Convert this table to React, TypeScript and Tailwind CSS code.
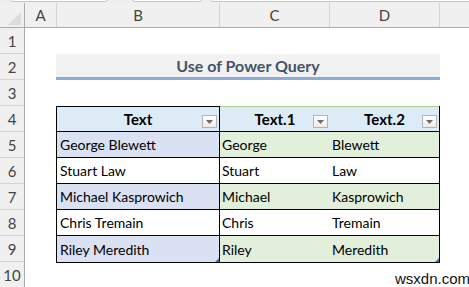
import React from 'react';

const ROWS = [
  { full: 'George Blewett', first: 'George', last: 'Blewett' },
  { full: 'Stuart Law', first: 'Stuart', last: 'Law' },
  { full: 'Michael Kasprowich', first: 'Michael', last: 'Kasprowich' },
  { full: 'Chris Tremain', first: 'Chris', last: 'Tremain' },
  { full: 'Riley Meredith', first: 'Riley', last: 'Meredith' },
];

function FilterButton() {
  return (
    <div className="w-[15px] h-[13px] border border-[#b4b4b4] bg-gradient-to-b from-white to-[#ececec] flex items-center justify-center">
      <svg width="7" height="4" viewBox="0 0 7 4">
        <path d="M0 0 L7 0 L3.5 4 Z" fill="#6b6b6b" />
      </svg>
    </div>
  );
}

function Handle() {
  return (
    <svg className="absolute right-0 bottom-0" width="4" height="4" viewBox="0 0 4 4">
      <path d="M4 0 L4 4 L0 4 Z" fill="#4472c4" />
    </svg>
  );
}

export default function App() {
  return (
    <div className="relative w-[469px] h-[287px] overflow-hidden bg-white font-['Lato',sans-serif]">
      {/* formula bar edges */}
      <div className="h-[3px] bg-[#eeeeee] relative">
        <div className="absolute left-[10px] top-[-6px] w-[98px] h-[8px] bg-white border border-[#c6c6c6] rounded-[3px]" />
        <div className="absolute left-[132px] top-[-6px] w-[70px] h-[8px] bg-white border border-[#c6c6c6] rounded-[3px]" />
        <div className="absolute left-[210px] top-[-6px] w-[270px] h-[8px] bg-white border border-[#c6c6c6] rounded-[3px]" />
      </div>

      {/* column headers */}
      <div className="flex h-[25px] bg-[#f0f0f0] border-b border-[#ababab] text-[15px] text-[#444444]">
        <div className="w-[25px] border-r border-[#ababab] flex items-end justify-end pr-[3px] pb-[2px]">
          <svg width="13" height="13" viewBox="0 0 13 13">
            <path d="M13 0 L13 13 L0 13 Z" fill="#dcdcdc" />
          </svg>
        </div>
        <div className="w-[32px] border-r border-[#d4d4d4] flex items-center justify-center">A</div>
        <div className="w-[163px] border-r border-[#d4d4d4] flex items-center justify-center">B</div>
        <div className="w-[110px] border-r border-[#d4d4d4] flex items-center justify-center">C</div>
        <div className="w-[110px] border-r border-[#d4d4d4] flex items-center justify-center">D</div>
        <div className="flex-1" />
      </div>

      <div className="flex">
        {/* row headers */}
        <div className="w-[25px] bg-[#f0f0f0] border-r border-[#ababab] text-[15px] text-[#444444]">
          {[1, 2, 3, 4, 5, 6, 7, 8, 9, 10].map((n) => (
            <div key={n} className="h-[26px] border-b border-[#d4d4d4] flex items-end justify-center pb-[1px]">
              {n}
            </div>
          ))}
        </div>

        {/* sheet */}
        <div className="flex-1 pl-[31px]">
          <div className="h-[26px]" />
          <div className="w-[384px] h-[26px] bg-[#f2f2f2] border-b-[3px] border-[#8eaadb] flex items-center justify-center text-[16px] font-bold text-[#44546a]">
            Use of Power Query
          </div>
          <div className="h-[26px]" />

          <div className="w-[384px] border-l border-r border-b border-black text-[14px] text-black">
            <div className="flex h-[26px] border-b border-black text-[15px]">
              <div className="w-[163px] border-r border-t border-black bg-[#ddebf7] relative flex items-center justify-center font-bold">
                Text
                <div className="absolute right-[2px] top-[8px]">
                  <FilterButton />
                </div>
              </div>
              <div className="flex-1 flex border-t border-[#a9d08e] bg-[#ddebf7] font-bold">
                <div className="w-[110px] relative flex items-center justify-center">
                  Text.1
                  <div className="absolute right-[2px] top-[8px]">
                    <FilterButton />
                  </div>
                </div>
                <div className="flex-1 relative flex items-center justify-center">
                  Text.2
                  <div className="absolute right-[2px] top-[8px]">
                    <FilterButton />
                  </div>
                </div>
              </div>
            </div>

            {ROWS.map((r, i) => {
              const odd = i % 2 === 0;
              const last = i === ROWS.length - 1;
              return (
                <div key={r.full} className={`flex h-[26px] ${last ? '' : 'border-b border-black'}`}>
                  <div className={`w-[163px] border-r border-black pl-[3px] flex items-center relative ${odd ? 'bg-[#d9e1f2]' : 'bg-white'}`}>
                    {r.full}
                    {last && <Handle />}
                  </div>
                  <div className={`flex-1 flex relative ${odd ? 'bg-[#e2efda]' : 'bg-white'}`}>
                    <div className="w-[110px] pl-[2px] flex items-center">{r.first}</div>
                    <div className="flex-1 pl-[2px] flex items-center">{r.last}</div>
                    {last && <Handle />}
                  </div>
                </div>
              );
            })}
          </div>
        </div>
      </div>

      <div className="absolute left-[395px] top-[268px] text-[15px] text-[#111111] font-['Liberation_Sans',sans-serif]">
        wsxdn.com
      </div>
    </div>
  );
}
